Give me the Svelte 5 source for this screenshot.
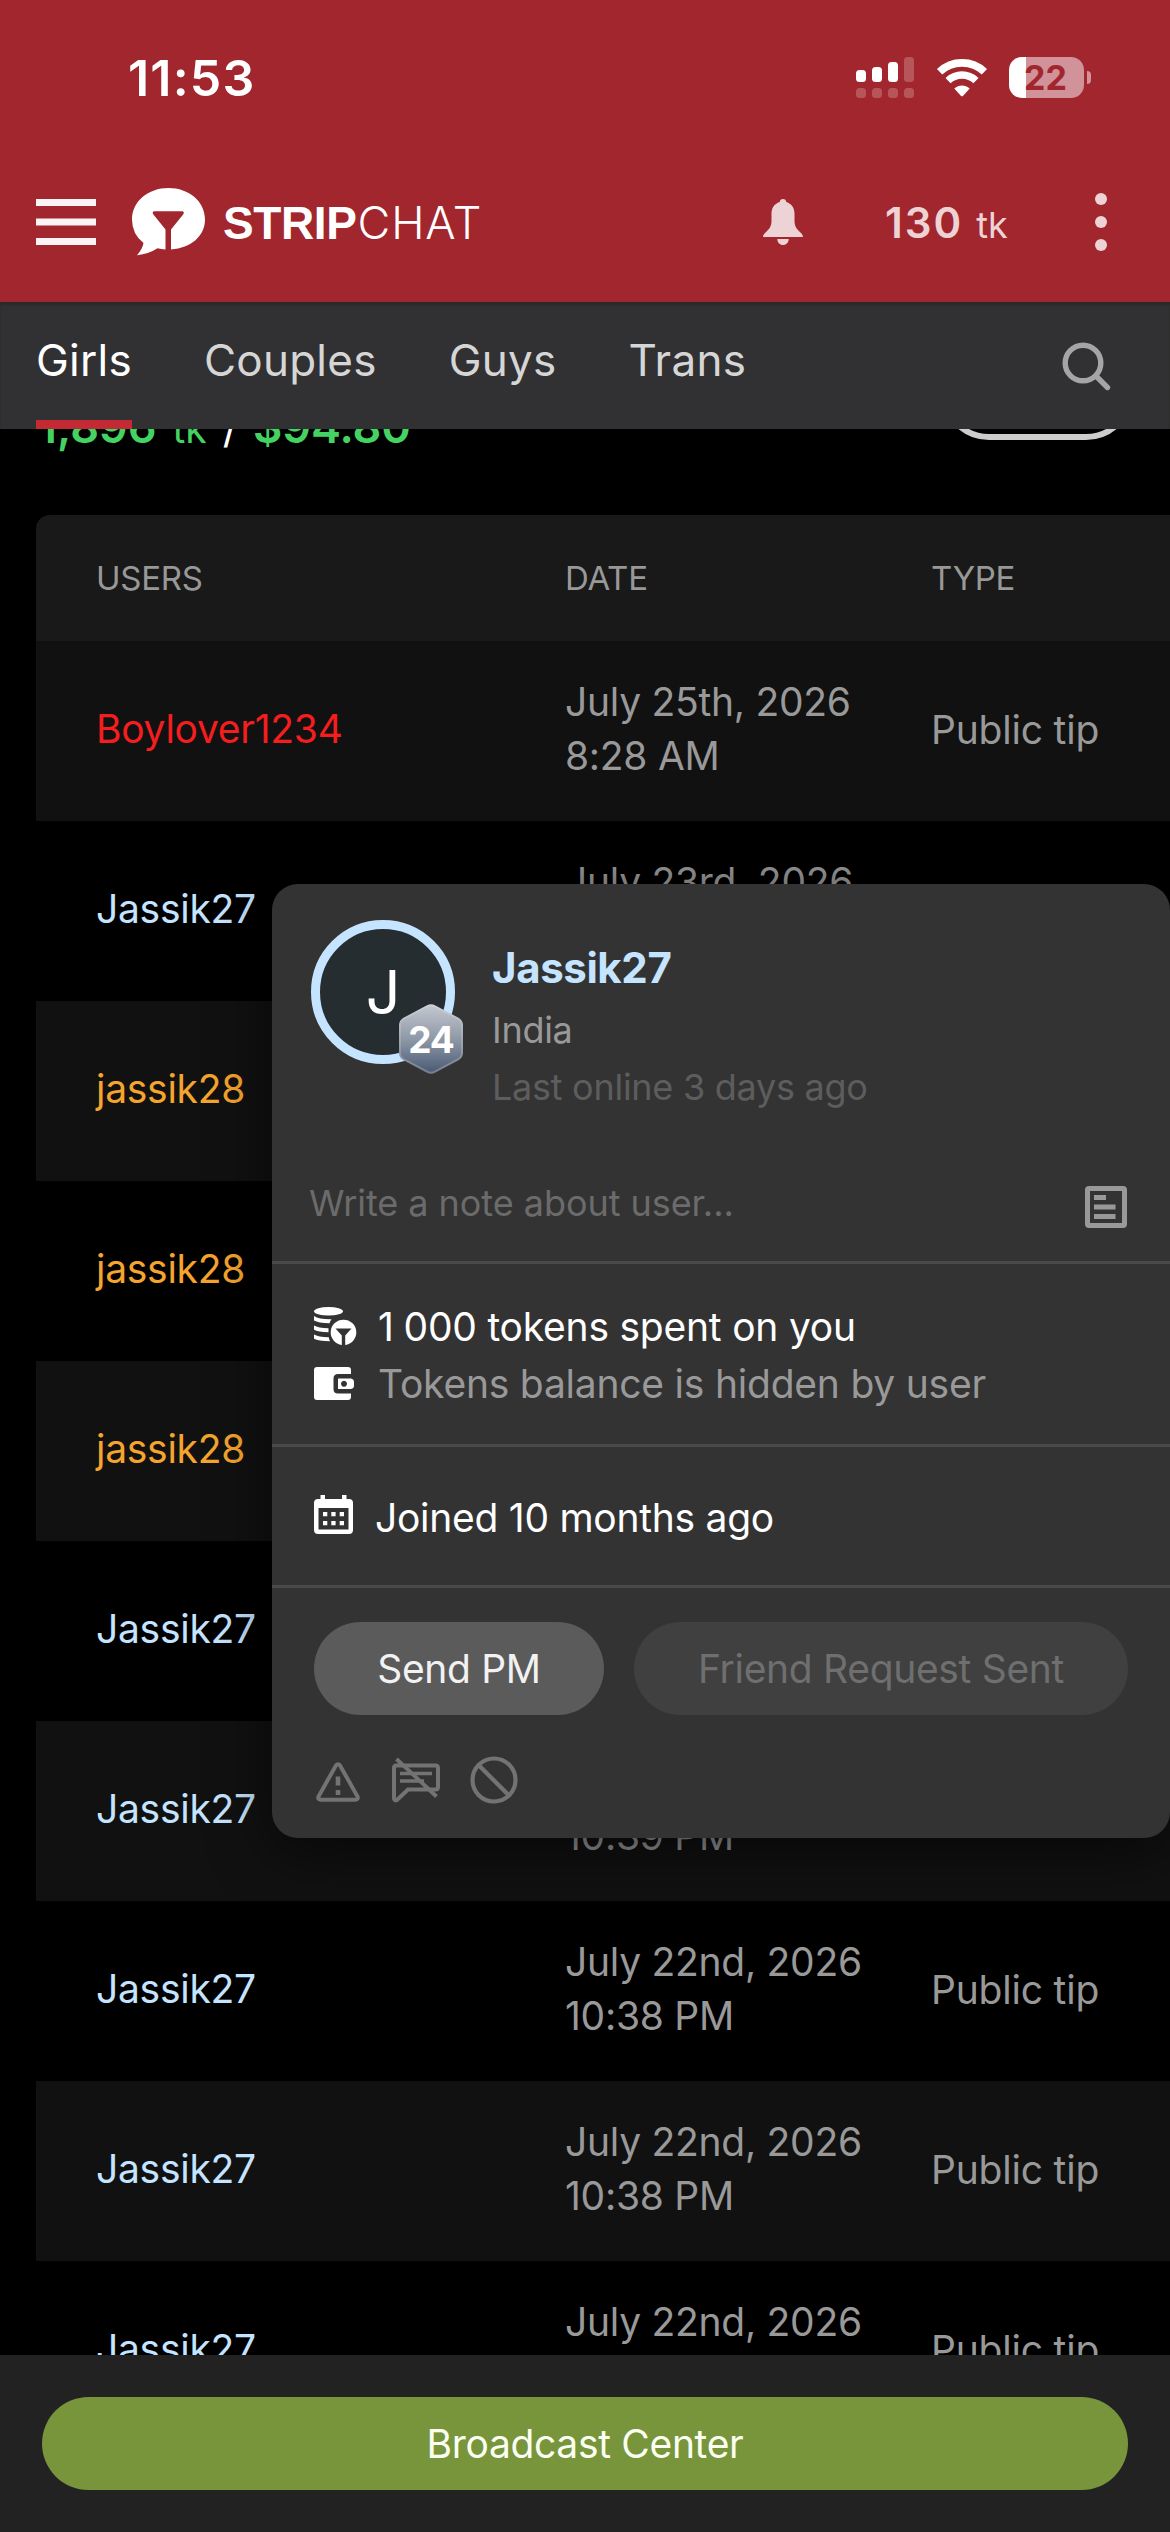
<script>
  const tabs = ['Girls', 'Couples', 'Guys', 'Trans'];
  const rows = [
    { user: 'Boylover1234', tone: 'red', date: 'July 25th, 2026', time: '8:28 AM' },
    { user: 'Jassik27', tone: 'blue', date: 'July 23rd, 2026', time: '9:14 PM' },
    { user: 'jassik28', tone: 'gold', date: 'July 23rd, 2026', time: '9:12 PM' },
    { user: 'jassik28', tone: 'gold', date: 'July 23rd, 2026', time: '9:10 PM' },
    { user: 'jassik28', tone: 'gold', date: 'July 23rd, 2026', time: '9:08 PM' },
    { user: 'Jassik27', tone: 'blue', date: 'July 22nd, 2026', time: '10:40 PM' },
    { user: 'Jassik27', tone: 'blue', date: 'July 22nd, 2026', time: '10:39 PM' },
    { user: 'Jassik27', tone: 'blue', date: 'July 22nd, 2026', time: '10:38 PM' },
    { user: 'Jassik27', tone: 'blue', date: 'July 22nd, 2026', time: '10:38 PM' },
    { user: 'Jassik27', tone: 'blue', date: 'July 22nd, 2026', time: '10:38 PM' }
  ];
</script>

<div class="screen">
  <header>
    <div class="status">
      <span class="clock">11:53</span>
      <div class="indicators">
        <svg class="signal" width="58" height="41" viewBox="0 0 58 41" fill="#fff">
          <rect x="0" y="13" width="10" height="12" rx="3.5" />
          <rect x="16" y="10" width="10" height="15" rx="3.5" />
          <rect x="32" y="5" width="10" height="20" rx="3.5" />
          <g opacity=".22">
            <rect x="48" y="0" width="10" height="25" rx="3.5" />
            <rect x="0" y="31" width="10" height="10" rx="3.5" />
            <rect x="16" y="31" width="10" height="10" rx="3.5" />
            <rect x="32" y="31" width="10" height="10" rx="3.5" />
            <rect x="48" y="31" width="10" height="10" rx="3.5" />
          </g>
        </svg>
        <svg class="wifi" width="52" height="38" viewBox="0 0 52 38">
          <path d="M3.6 12.8C16 .9 36 .9 48.4 12.8" fill="none" stroke="#fff" stroke-width="7.6" />
          <path d="M12 21.6c8-7.4 20-7.4 28 0" fill="none" stroke="#fff" stroke-width="7.4" />
          <path d="M18.300 29.500c4.500-4 10.900-4 15.400 0l-6.500 7.200q-1.200 1.200-2.400 0Z" fill="#fff" />
        </svg>
        <div class="battery"><span>22</span></div>
        <i class="knob"></i>
      </div>
    </div>
    <div class="bar">
      <svg class="burger" width="60" height="46" viewBox="0 0 60 46" fill="#fcf4f4">
        <rect width="60" height="7" /><rect y="19.500" width="60" height="7" /><rect y="39" width="60" height="7" />
      </svg>
      <svg class="bubble" width="73" height="68" viewBox="0 0 73 68">
        <path d="M36.500 0C57 0 73 13.500 73 31.500C73 48 59 60 39 61.500V41.500L51.500 26Q52.500 23.300 50 23.200H22.500Q20 23.300 21 26L33.500 41.500V61.500Q29 61.400 25.500 60.300Q17 66 5 67.200Q10.500 61 11.500 55Q0 46 0 31.500C0 13.500 16 0 36.500 0Z" fill="#fff" />
      </svg>
      <div class="brand"><b>STRIP</b><span>CHAT</span></div>
      <svg class="bell" width="40" height="46" viewBox="0 0 40 46" fill="#edd3d5">
        <path d="M20 0c2 0 3 1.200 3.300 3C29 5 31.500 9 31.500 15v7c0 6 3 8.500 6 11.500 1.700 1.600 2.500 3 2.500 4.500H0c0-1.500.8-2.900 2.500-4.500 3-3 6-5.500 6-11.500v-7C8.500 9 11 5 16.700 3 17 1.200 18 0 20 0Z" />
        <path d="M14.300 40h11.400c0 3.500-2.500 6-5.700 6s-5.700-2.500-5.700-6Z" />
      </svg>
      <div class="balance"><b>130</b><span>tk</span></div>
      <svg class="dots" width="12" height="58" viewBox="0 0 12 58" fill="#edd3d5">
        <circle cx="6" cy="6" r="6" /><circle cx="6" cy="29" r="6" /><circle cx="6" cy="52" r="6" />
      </svg>
    </div>
  </header>

  <nav>
    {#each tabs as tab, i}
      <span class="tab" class:active={i === 0}>{tab}</span>
    {/each}
    <svg class="search" width="50" height="50" viewBox="0 0 50 50" fill="none" stroke="#a5a5a6" stroke-width="5.400" stroke-linecap="round">
      <circle cx="21" cy="21" r="17.800" /><path d="M34.500 34.500 45.500 45.500" />
    </svg>
  </nav>

  <main>
    <div class="summary">
      <div class="earned"><b>1,896</b><span class="tk">tk</span><span class="slash">/</span><b>$94.80</b></div>
      <div class="outline"></div>
    </div>
    <div class="table">
      <div class="row head"><span>USERS</span><span>DATE</span><span>TYPE</span></div>
      {#each rows as row}
        <div class="row">
          <span class="user {row.tone}">{row.user}</span>
          <span class="date">{row.date}<br />{row.time}</span>
          <span class="type">Public tip</span>
        </div>
      {/each}
    </div>
  </main>

  <footer><button class="broadcast">Broadcast Center</button></footer>

  <section class="popup">
    <div class="profile">
      <div class="avatar">
        <span>J</span>
        <div class="level">
          <svg width="64" height="70" viewBox="0 0 64 70">
            <defs>
              <linearGradient id="lvl" x1="0" y1="0" x2="0" y2="1">
                <stop offset="0" stop-color="#c3c8d0" /><stop offset=".5" stop-color="#8f98a6" /><stop offset="1" stop-color="#4a5a75" />
              </linearGradient>
              <linearGradient id="rim" x1="0" y1="0" x2="0" y2="1">
                <stop offset="0" stop-color="#cdd1d8" /><stop offset="1" stop-color="#747f90" />
              </linearGradient>
            </defs>
            <path d="M28 2.300Q32 0 36 2.300L59 14.500Q63 17 63 21V49Q63 53 59 55.500L36 67.700Q32 70 28 67.700L5 55.500Q1 53 1 49V21Q1 17 5 14.500Z" fill="url(#lvl)" stroke="url(#rim)" stroke-width="2" />
          </svg>
          <b>24</b>
        </div>
      </div>
      <div class="who">
        <b class="name">Jassik27</b>
        <span class="country">India</span>
        <span class="seen">Last online 3 days ago</span>
      </div>
    </div>
    <div class="note">
      <span>Write a note about user...</span>
      <svg width="42" height="42" viewBox="0 0 42 42" fill="#999">
        <path fill-rule="evenodd" d="M4 0h34q4 0 4 4v34q0 4-4 4H4q-4 0-4-4V4Q0 0 4 0ZM5 5V37H37V5Z" />
        <rect x="9" y="9" width="12" height="5" /><rect x="9" y="18.500" width="21.500" height="5" /><rect x="9" y="28" width="21.500" height="5" />
      </svg>
    </div>
    <div class="facts">
      <div class="fact spent">
        <svg width="42" height="39" viewBox="0 0 42 39" fill="#fff">
          <ellipse cx="14.500" cy="4.300" rx="14.500" ry="4.300" />
          <path d="M0 9Q5 12.500 17.500 12.300Q16.300 13.800 15.500 16.300Q4 16 0 13.500Z" />
          <path d="M0 18.500Q4 21 14.500 21.300V25.300Q4 25 0 22.700Z" />
          <path d="M0 27.500Q4 30 14.800 30.300Q15 32.500 16 34.300Q4 34 0 31.700Z" />
          <path fill-rule="evenodd" d="M31.200 38A12.700 12.700 0 0 0 29.500 12.700A12.700 12.700 0 0 0 27.800 38V28.500L21.500 21.500H37.500L31.200 28.500Z" />
        </svg>
        <span>1&#8201;<span class="hundreds">000</span> tokens spent on you</span>
      </div>
      <div class="fact hidden">
        <svg width="42" height="34" viewBox="0 0 42 34" fill="#fff">
          <path d="M3 0H34Q37 0 37 3V7H24Q19.500 7 19.500 11.500V22Q19.500 26.500 24 26.500H37V30Q37 33 34 33H3Q0 33 0 30V3Q0 0 3 0Z" />
          <path fill-rule="evenodd" d="M24 11.500H37Q40 12 40 15V18.500Q40 21.500 37 22H24ZM30 13.700a3 3 0 1 0 .01 0Z" />
        </svg>
        <span>Tokens balance is hidden by user</span>
      </div>
    </div>
    <div class="joined">
      <svg width="40" height="39" viewBox="0 0 40 39" fill="#fff">
        <path fill-rule="evenodd" d="M6.500 0H11V4H28V0H32.500V4H35Q39 4 39 8V35Q39 39 35 39H4Q0 39 0 35V8Q0 4 4 4H6.500ZM4.500 13V34.500H34.500V13Z" />
        <path d="M9 17h4.300v4.300H9zM17.300 17h4.300v4.300h-4.300zM25.700 17H30v4.300h-4.300zM9 26h4.300v4.300H9zM17.300 26h4.300v4.300h-4.300zM25.700 26H30v4.300h-4.300z" />
      </svg>
      <span>Joined 10 months ago</span>
    </div>
    <div class="actions">
      <button class="pm">Send PM</button>
      <button class="friend">Friend Request Sent</button>
    </div>
    <div class="tools">
      <svg class="warn" width="44" height="40" viewBox="0 0 44 40" fill="none" stroke="#737373" stroke-width="4">
        <path d="M19.800 3.700Q22 .6 24.200 3.700L41.500 34.500Q42.600 37.500 39.500 37.800H4.500Q1.400 37.500 2.500 34.500Z" />
        <path d="M22 14.500V23.500" stroke-width="4.600" stroke-linecap="butt" /><path d="M22 28V33" stroke-width="4.600" />
      </svg>
      <svg class="mute" width="50" height="46" viewBox="0 0 50 46" fill="none" stroke="#737373" stroke-width="4">
        <path d="M5.500 8.500H44.500Q47 8.500 47 11V30Q47 32.500 44.500 32.500H17L6 43Q3 44 3 41V11Q3 8.500 5.500 8.500Z" />
        <path d="M9 16.500H41M9 24H33" stroke-width="3.600" />
        <path d="M5.500 2 45.500 39.500" stroke-width="3.800" />
      </svg>
      <svg class="ban" width="48" height="48" viewBox="0 0 48 48" fill="none" stroke="#737373" stroke-width="4.200">
        <circle cx="24" cy="24" r="21.500" /><path d="M9 9.500 38.500 39" />
      </svg>
    </div>
  </section>
</div>

<style>
  :global(body) { margin: 0; background: #000; }
  .screen {
    position: relative;
    width: 1170px; height: 2532px;
    display: flex; flex-direction: column;
    overflow: hidden;
    background: #000;
    font-family: Inter, "Liberation Sans", sans-serif;
    font-size: 39px;
    letter-spacing: -0.27px;
    color: #999;
    white-space: nowrap;
  }
  button { border: 0; padding: 0; font: inherit; letter-spacing: -0.32px; white-space: nowrap; }
  svg { display: block; flex: none; overflow: visible; }

  header { flex: none; height: 302px; background: #a2262d; }
  .status { height: 155px; box-sizing: border-box; padding: 0 79px 0 128px; display: flex; justify-content: space-between; align-items: center; }
  .clock { color: #fff; font-size: 50px; font-weight: 600; letter-spacing: 1.2px; }
  .indicators { display: flex; align-items: center; }
  .wifi { margin-left: 22px; }
  .battery {
    margin-left: 21px; width: 75px; height: 41px; border-radius: 13px;
    display: flex; align-items: center; justify-content: center;
    background: linear-gradient(90deg, #fff 17px, #d1929a 17px);
    color: #a2262d; font-size: 34px; font-weight: 700; letter-spacing: 0;
  }
  .battery span { margin-right: 2px; }
  .knob { width: 4px; height: 13px; margin-left: 3px; background: #d1929a; border-radius: 0 5px 5px 0; }
  .bar { height: 134px; display: flex; align-items: center; padding: 0 63px 0 36px; }
  .bubble { margin-left: 36px; }
  .brand { margin-left: 18px; color: #fff; font-family: "Liberation Sans", sans-serif; font-size: 46px; display: flex; align-items: baseline; }
  .brand b { letter-spacing: -0.4px; }
  .brand span { font-family: Inter, sans-serif; font-weight: 300; font-size: 45px; letter-spacing: 0.9px; margin-left: 1px; }
  .bell { margin-left: auto; }
  .balance { margin-left: 82px; width: 124px; color: #edd3d5; display: flex; gap: 13px; align-items: baseline; }
  .balance b { font-size: 42px; font-weight: 600; letter-spacing: 2px; }
  .balance span { font-size: 36px; letter-spacing: 0; }
  .dots { margin-left: 86px; }

  nav { flex: none; height: 127px; box-sizing: border-box; background: #313133; padding: 0 58px 0 36px; display: flex; gap: 72px; font-size: 44px; letter-spacing: 0.25px; color: #d6d6d6; box-shadow: inset 0 3px 2px #2a2829; }
  .tab { box-sizing: border-box; height: 127px; line-height: 117px; }
  .active { color: #fff; border-bottom: 9px solid #c42a34; }
  .search { margin: 40px 0 0 auto; }

  main { flex: 1; min-height: 0; overflow: hidden; }
  .summary { margin-top: -85px; height: 96px; padding: 0 36px 0 38px; display: flex; justify-content: space-between; align-items: flex-end; }
  .earned { display: flex; align-items: baseline; margin-bottom: -13px; line-height: 48px; font-size: 45px; letter-spacing: 0; color: #44d362; }
  .earned b { font-weight: 600; }
  .tk { font-size: 39px; margin-left: 16px; }
  .slash { color: #fff; margin: 0 15px 0 16px; font-size: 42px; }
  .outline { box-sizing: border-box; width: 193px; height: 96px; border: 6px solid #ccc; border-radius: 48px; }
  .table { margin: 75px 0 0 36px; border-radius: 14px 0 0 0; overflow: hidden; }
  .row { height: 180px; box-sizing: border-box; padding-left: 60px; display: grid; grid-template-columns: 469px 366px 1fr; align-items: center; }
  .row:nth-child(even) { background: #111; }
  .head { height: 126px; background: #191919; font-size: 33px; color: #989898; }
  .date { line-height: 54px; padding-bottom: 4px; }
  .user { padding-bottom: 6px; }
  .type { padding-bottom: 4px; letter-spacing: -0.2px; }
  .red { color: #f51e1e; }
  .blue { color: #c5e4ff; }
  .gold { color: #f5a52e; }

  footer { flex: none; height: 177px; box-sizing: border-box; padding: 42px 42px 0; background: #222; }
  .broadcast { width: 1086px; height: 93px; border-radius: 47px; background: #78953c; color: #fafff2; }

  .popup { position: absolute; left: 272px; top: 884px; width: 898px; height: 954px; border-radius: 26px; background: #333; box-shadow: 0 12px 60px rgba(0, 0, 0, .6); display: flex; flex-direction: column; }
  .profile { height: 264px; box-sizing: border-box; padding: 36px 0 0 39px; display: flex; }
  .avatar { position: relative; width: 144px; height: 144px; box-sizing: border-box; border: 9px solid #c5e4ff; border-radius: 50%; background: #252d31; color: #fff; display: flex; align-items: center; justify-content: center; font-size: 61px; }
  .level { position: absolute; left: 79px; top: 75px; width: 64px; height: 70px; display: grid; place-items: center; }
  .level svg, .level b { grid-area: 1 / 1; }
  .level b { font-size: 37px; font-weight: 700; color: #fff; letter-spacing: -1px; }
  .who { margin: 21px 0 0 37px; display: flex; flex-direction: column; font-size: 36px; line-height: 57px; }
  .name { color: #c5e4ff; font-size: 42px; line-height: 54px; letter-spacing: -0.4px; }
  .country { margin-top: 7px; color: #999; }
  .seen { color: #5d5d5d; }
  .note { height: 113px; box-sizing: border-box; padding: 0 43px 4px 37px; display: flex; align-items: center; justify-content: space-between; font-size: 36px; letter-spacing: -0.05px; color: #6b6b6b; }
  .note svg { margin-top: 8px; }
  .facts { height: 183px; box-sizing: border-box; border-top: 3px solid #4a4a4a; padding: 34px 0 0 42px; }
  .fact { height: 57px; display: flex; align-items: center; gap: 22px; letter-spacing: -0.22px; }
  .hundreds { margin-left: 3px; }
  .spent, .joined { color: #fff; }
  .joined { height: 141px; box-sizing: border-box; border-top: 3px solid #4a4a4a; padding-left: 42px; display: flex; align-items: center; gap: 21px; }
  .joined svg { margin-bottom: 3px; }
  .joined span { padding-top: 3px; }
  .actions { height: 134px; box-sizing: border-box; border-top: 3px solid #4a4a4a; padding: 34px 0 0 42px; display: flex; gap: 30px; }
  .actions button { height: 93px; border-radius: 47px; }
  .pm { width: 290px; background: #5b5b5b; color: #f2f2f2; }
  .friend { width: 494px; background: #404040; color: #6f6f6f; }
  .tools { padding: 37px 0 0 44px; display: flex; align-items: flex-start; }
  .warn { margin-top: 6px; }
  .mute { margin: 1px 0 0 31px; }
  .ban { margin-left: 29px; }
</style>
